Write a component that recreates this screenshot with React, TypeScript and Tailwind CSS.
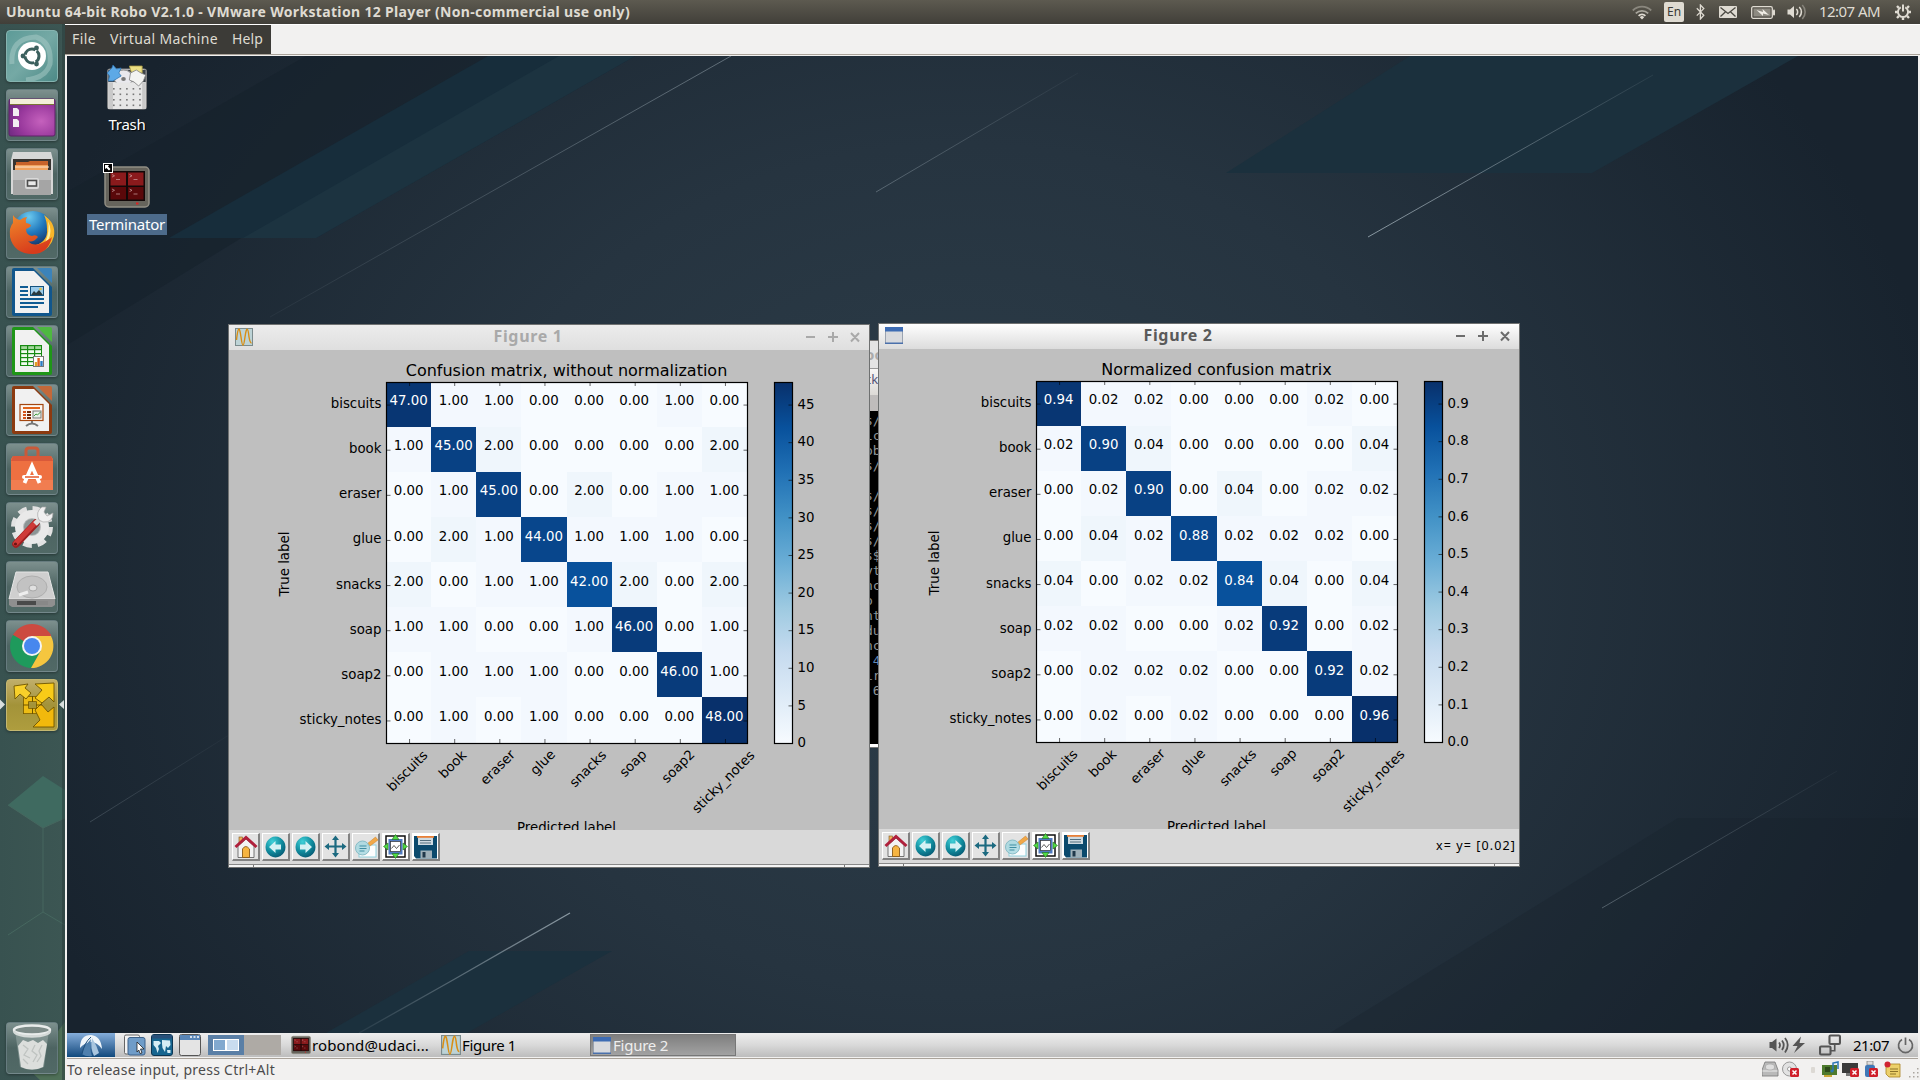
import React, { useLayoutEffect, useRef, useState } from 'react';

/** Text stretched by letter spacing so that it takes a given width. */
function Fit({ w, className = '', children }: { w: number; className?: string; children: string }) {
  const ref = useRef<HTMLSpanElement>(null);
  const [ls, setLs] = useState(0);
  useLayoutEffect(() => {
    if (ref.current) setLs((w - ref.current.getBoundingClientRect().width) / children.length);
  }, [w, children]);
  return (
    <span className={`inline-block whitespace-nowrap ${className}`} style={{ width: w }}>
      <span ref={ref} style={{ letterSpacing: ls }}>{children}</span>
    </span>
  );
}

/* ---------- host panel ---------- */

function HostBar() {
  return (
    <header className="flex h-6 shrink-0 items-center justify-between bg-linear-to-b from-[#5d5a50] to-[#413f39] pl-1.5 text-[#dfdbd2]">
      <Fit w={624} className="text-[14px] leading-6 font-bold">
        Ubuntu 64-bit Robo V2.1.0 - VMware Workstation 12 Player (Non-commercial use only)
      </Fit>
      <div className="flex h-6 items-center pr-2">
        <svg className="mr-3" width="20" height="16" viewBox="0 0 20 16" fill="none" strokeWidth="1.8">
          <path d="M0.8 6.5 A13 13 0 0 1 19.2 6.5" stroke="#8a877e" />
          <path d="M3.8 9.3 A9 9 0 0 1 16.2 9.3" stroke="#a9a69d" />
          <path d="M6.6 11.8 A5 5 0 0 1 13.4 11.8" stroke="#dfdbd2" />
          <path d="M10 15.5 L7.8 13.2 A3 3 0 0 1 12.2 13.2 Z" fill="#dfdbd2" />
        </svg>
        <span className="mr-3 flex h-5 w-5 items-center justify-center rounded-[2px] bg-[#dfdbd2] text-[12px] text-[#3c3b37]">En</span>
        <svg className="mr-3.5" width="9" height="16" viewBox="0 0 9 16" fill="none" stroke="#dfdbd2" strokeWidth="1.3">
          <path d="M0.8 4.2 L7.8 11.2 L4.4 15 V1 L7.8 4.6 L0.8 11.6" />
        </svg>
        <svg className="mr-3.5" width="18" height="12" viewBox="0 0 18 12">
          <rect width="18" height="12" rx="1" fill="#dfdbd2" />
          <path d="M1.5 1.5 L9 7.5 L16.5 1.5 M1.5 10.5 L6.3 6 M16.5 10.5 L11.7 6" fill="none" stroke="#4a4841" strokeWidth="1.3" />
        </svg>
        <svg className="mr-3" width="24" height="13" viewBox="0 0 24 13">
          <rect x="0.7" y="0.7" width="20.6" height="11.6" rx="1.5" fill="none" stroke="#dfdbd2" strokeWidth="1.3" />
          <rect x="2.5" y="2.5" width="17" height="8" fill="#8d8a81" />
          <path d="M5.5 4 L12 6 L11.5 3 L18 9 L12 7.5 L12 10 Z" fill="#f0ede5" />
          <rect x="22" y="3.5" width="2" height="6" rx="1" fill="#dfdbd2" />
        </svg>
        <svg className="mr-3" width="20" height="16" viewBox="0 0 20 16" fill="none" stroke="#dfdbd2" strokeWidth="1.6">
          <path d="M0.5 5.5 H3 L7 2 V14 L3 10.5 H0.5 Z" fill="#dfdbd2" stroke="none" />
          <path d="M9.3 5 A4 4 0 0 1 9.3 11" />
          <path d="M12.3 3 A7 7 0 0 1 12.3 13" />
          <path d="M15.3 1 A10 10 0 0 1 15.3 15" stroke="#87847b" />
        </svg>
        <Fit w={61} className="-mt-px mr-3.5 text-[15px]">12:07 AM</Fit>
        <svg width="18" height="18" viewBox="-1 -1 18 18" fill="none" stroke="#dfdbd2">
          <path d="M5.8 3.4 A5.1 5.1 0 1 0 10.2 3.4" strokeWidth="2" />
          <path d="M8 0.5 V7.5" strokeWidth="2" />
          <path d="M3.8 3.8 L2 2 M12.2 3.8 L14 2 M2.6 8 H0 M13.400 8 H16 M3.800 12.200 L2 14 M12.200 12.200 L14 14 M8 13.400 V16" strokeWidth="2.4" />
        </svg>
      </div>
    </header>
  );
}

/* ---------- launcher ---------- */

function Tile({ children, tone = 'glass' }: { children: React.ReactNode; tone?: 'glass' | 'teal' | 'gold' }) {
  const tones = {
    glass: 'bg-linear-to-b from-[#7d908e] via-[#4d6462] to-[#516966] border-[#71858a]/70',
    teal: 'bg-linear-to-br from-[#5d9b98] via-[#75a9a5] to-[#4c8a87] border-[#86b4b0]',
    gold: 'bg-linear-to-b from-[#c0ae6a] via-[#a39339] to-[#ae9d3e] border-[#c4b871]',
  };
  return (
    <div className={`h-[52px] w-[52px] shrink-0 overflow-hidden rounded-[4px] border shadow-[0_1px_3px_rgba(0,0,0,0.35)] ${tones[tone]}`}>
      <svg className="-m-px" width="52" height="52" viewBox="0 0 52 52">{children}</svg>
    </div>
  );
}

function DocBase({ dark, light }: { dark: string; light: string }) {
  return (
    <>
      <path d="M8 2 H27 L46 21 V48 Q46 50 44 50 H8 Q6 50 6 48 V4 Q6 2 8 2 Z" fill={dark} />
      <path d="M31 2 H44 Q46 2 46 4 V17 Z" fill={light} />
      <path d="M9 5 H28 L43 20 V47 H9 Z" fill="#f1f1f1" />
    </>
  );
}

function Launcher() {
  return (
    <nav className="relative flex w-[65px] shrink-0 flex-col justify-between overflow-hidden bg-linear-to-r from-[#385250] to-[#3c5653] pt-1.5 pb-1.5 pl-1.5">
      <svg className="absolute top-0 left-0" width="65" height="1056" viewBox="0 24 65 1056">
        <path d="M8 805 L43 776 L65 790 V818 L43 828 Z" fill="#3f6a60" />
        <path d="M43 828 V912 L8 935 M43 912 L65 925 M8 805 L43 828 L65 818" stroke="#46675f" fill="none" />
        <path d="M8 1050 L55 1035 L65 1022 V1080 H40 Z" fill="#4f7058" />
        <rect x="62" y="24" width="3" height="1056" fill="#28393a" opacity="0.5" />
      </svg>
      <div className="relative flex flex-col gap-[7px]">
        <Tile tone="teal">
          <path d="M6 34 Q4 8 30 7 Q46 12 44 34 Q40 48 20 50" fill="none" stroke="#a9ccc8" strokeWidth="5" opacity="0.5" />
          <circle cx="26" cy="26" r="14" fill="#fff" />
          <circle cx="26" cy="26" r="7" fill="none" stroke="#3b5f5d" strokeWidth="3" strokeDasharray="13 1.66" strokeDashoffset="6" />
          <circle cx="17" cy="26" r="2.4" fill="#3b5f5d" /><circle cx="30.5" cy="18" r="2.4" fill="#3b5f5d" /><circle cx="30.5" cy="34" r="2.4" fill="#3b5f5d" />
        </Tile>
        <Tile>
          <defs><radialGradient id="pur" cx="0.7" cy="0.6" r="0.8"><stop offset="0" stopColor="#c561bd" /><stop offset="0.6" stopColor="#98389c" /><stop offset="1" stopColor="#6d2a80" /></radialGradient></defs>
          <rect x="3" y="10" width="46" height="37" rx="2" fill="url(#pur)" stroke="#5f2369" />
          <path d="M4 10 H48 V15 H4 Z" fill="#f3efd9" /><path d="M4 15.5 H48" stroke="#7b7535" />
          <path d="M7 19 h4 l2 2 v6 h-6 Z M7 30 h4 l2 2 v6 h-6 Z" fill="#f2eef2" />
        </Tile>
        <Tile>
          <path d="M7 4 H45 L47 12 V46 H5 V12 Z" fill="#d7d7d7" />
          <rect x="7" y="11" width="38" height="12" fill="#383431" />
          <path d="M10 14 h12 l2 -1 h18 v10 H10 Z" fill="#c7622a" /><path d="M9 17 h33 v6 H9 Z" fill="#f0a25e" /><path d="M9 19 h34" stroke="#fde4cd" />
          <path d="M7 22 H45 V47 H7 Z" fill="#a5a5a5" /><path d="M7 22 H45 V32 H7 Z" fill="#bdbdbd" />
          <rect x="19" y="30" width="14" height="11" rx="2" fill="#dadada" /><rect x="21.5" y="32.5" width="9" height="5.5" fill="#e8e8e8" stroke="#4d4d4d" strokeWidth="1.6" />
        </Tile>
        <Tile>
          <defs><radialGradient id="ff" cx="0.4" cy="0.15" r="0.8"><stop offset="0" stopColor="#6cc9ee" /><stop offset="0.5" stopColor="#2078bd" /><stop offset="1" stopColor="#152b5d" /></radialGradient>
            <linearGradient id="ffo" x1="0" y1="0" x2="0.4" y2="1"><stop offset="0" stopColor="#f08a2a" /><stop offset="1" stopColor="#d83c1c" /></linearGradient></defs>
          <circle cx="27" cy="24" r="20" fill="url(#ff)" />
          <path d="M38 8 Q50 16 48 29 Q45 42 32 46 L30 38 Q42 34 41 22 Q41 14 38 8 Z" fill="#f7b52a" />
          <path d="M42 14 Q47 24 42 34 L39 36 Q44 24 42 14 Z" fill="#fff1a0" />
          <path d="M7 8 Q9 12 14 13 Q18 10 21 10 Q19 13 20 16 Q25 17 25 19 Q23 21 20 22 Q20 28 26 29 Q30 27 32 30 Q27 36 22 34 Q27 40 36 36 Q44 32 46 30 Q42 47 27 47 Q8 47 4 30 Q3 20 7 16 Z" fill="url(#ffo)" />
        </Tile>
        <Tile>
          <DocBase dark="#11568c" light="#3c83b9" />
          <path d="M14 21 h8 M14 25 h8 M14 29 h8 M14 33 h24 M14 37 h24 M14 41 h18" stroke="#105c94" strokeWidth="1.8" />
          <rect x="24.5" y="20.5" width="13" height="9" fill="#9bcbea" stroke="#14537f" /><path d="M25 29 l3 -4 2 2 3 -3 4 5 Z" fill="#2b3a3f" /><circle cx="34.5" cy="23" r="1.3" fill="#e9c13e" />
        </Tile>
        <Tile>
          <DocBase dark="#1f9618" light="#4eb840" />
          <rect x="14" y="20" width="22" height="21" fill="#178a12" />
          {[0, 1, 2, 3, 4].map((r) => [0, 1, 2].map((c) => <rect key={`${r}${c}`} x={15.2 + c * 7} y={21.2 + r * 4} width="5.8" height="2.8" fill={r === 0 ? '#a5d79d' : '#f2fbf0'} />))}
          <rect x="27.5" y="31.5" width="10" height="10" fill="#fff" stroke="#777" /><path d="M30 41 v-4" stroke="#e0a020" strokeWidth="2.4" /><path d="M32.6 41 v-8" stroke="#e0601d" strokeWidth="2.4" /><path d="M35.5 41 v-5" stroke="#2b7cc4" strokeWidth="2.4" />
        </Tile>
        <Tile>
          <DocBase dark="#8c3a10" light="#c3693a" />
          <rect x="14" y="20.5" width="23" height="16" fill="#fdf6f0" stroke="#a4460f" strokeWidth="1.2" />
          <path d="M17 24 h17" stroke="#e0641c" strokeWidth="2" /><path d="M17 28 h3 M17 31 h3 M17 34 h3" stroke="#d4531a" strokeWidth="2" /><path d="M21 28 h4 M21 31 h4 M21 34 h4" stroke="#72290a" strokeWidth="2" />
          <rect x="27" y="27" width="8" height="7" fill="#e9efe9" stroke="#777" /><path d="M28 32 l2 -2 1.5 1 3 -3" stroke="#3c9a3c" fill="none" /><path d="M26 37 v3 M20 42 q6 -5 12 0" stroke="#777" strokeWidth="2" fill="none" />
        </Tile>
        <Tile>
          <path d="M20 16 V8 Q20 5 23 5 H29 Q32 5 32 8 V16" fill="none" stroke="#c85a3a" strokeWidth="3" />
          <path d="M7 13 H45 L47 16 V47 H5 V16 Z" fill="#ee7041" /><path d="M7 13 H45 L47 18 H5 Z" fill="#d9593a" /><path d="M5 37 H47 V47 H5 Z" fill="#f17d50" />
          <path d="M18.500 40 L26 23 L33.500 40" fill="none" stroke="#fff" strokeWidth="3.800" /><path d="M18 34 H34" stroke="#fff" strokeWidth="4" strokeLinecap="round" /><path d="M19 34 H33" stroke="#e4592b" strokeWidth="1.400" />
        </Tile>
        <Tile>
          <circle cx="26" cy="25" r="17" fill="none" stroke="#e2e2e2" strokeWidth="8" strokeDasharray="8 5.35" />
          <circle cx="26" cy="25" r="13" fill="#b9bcbc" stroke="#e9e9e9" strokeWidth="8" /><circle cx="26" cy="25" r="8" fill="#8c9595" />
          <path d="M10 42 L30 21" stroke="#9f1f20" strokeWidth="7.500" strokeLinecap="round" /><path d="M9.500 41.500 L29 21" stroke="#cf3a38" strokeWidth="5" strokeLinecap="round" />
          <path d="M29 22 L37 14" stroke="#dedede" strokeWidth="5" /><path d="M33 18 Q29 10 36 5 L40 5 L38 10 L41 14 L47 11 Q47 21 37 20 Z" fill="#f0f0f0" stroke="#a9a9a9" strokeWidth="0.7" />
          <circle cx="9.5" cy="42" r="1.6" fill="#6b1414" />
        </Tile>
        <Tile>
          <path d="M10 11 H42 L49 38 H3 Z" fill="#cfcfcf" stroke="#e6e6e6" /><path d="M3 38 H49 V44 L46 46 H6 L3 44 Z" fill="#8f8f8f" /><path d="M11 40 H42 V44 H11 Z" fill="#4a4a4a" /><path d="M30 40 H42 V44 H30 Z" fill="#888" />
          <ellipse cx="26" cy="26" rx="15" ry="11" fill="#c2c2c2" stroke="#aeaeae" /><ellipse cx="27" cy="27" rx="4" ry="3" fill="#e0e0e0" stroke="#a8a8a8" /><path d="M13 34 L22 31" stroke="#eee" strokeWidth="3" />
        </Tile>
        <Tile>
          <path d="M26 26 L6.900 15 A22 22 0 0 1 45 15 L45 16 L26 16 Z" fill="#cc4a40" />
          <path d="M26 26 L7 15 A22 22 0 0 0 25 48 L34.6 31 Z" fill="#1e9a5c" /><path d="M26 26 L34.600 31 L25 48 A22 22 0 0 0 45 16 L26 16 Z" fill="#f5c63f" />
          <circle cx="26" cy="26" r="10" fill="#f4f4f4" /><circle cx="26" cy="26" r="8" fill="#4787ee" />
        </Tile>
        <Tile tone="gold">
          <g stroke="#6e5500" strokeWidth="0.9">
            <path d="M20 20 H33 V32 H20 Z" fill="none" stroke="#6e5500" strokeWidth="6" /><path d="M20 20 H33 V32 H20 Z" fill="none" stroke="#eebd14" strokeWidth="4.400" />
            <path d="M8 7 L22 5 L19 9 L25 14 L20 20 L14 15 L9 20 Z" fill="#f8d02a" />
            <path d="M29 5 L48 4 V23 L43 18 L36 24 L29 19 L36 11 Z" fill="#f8cb18" />
            <path d="M29 31 L35 25 L42 33 L48 28 V48 H27 L34 41 Z" fill="#f2b90c" />
          </g>
          <path d="M17 26 h6 M30 26 h6 M26.500 17 v6 M26.500 29 v6" fill="none" stroke="#6e5500" strokeWidth="1" />
        </Tile>
      </div>
      <svg className="absolute top-[675px] left-0" width="65" height="12" viewBox="0 0 65 12" fill="#d8dedd"><path d="M0 0.5 L5 5.5 L0 10.5 Z M64 1 L59 5.5 L64 10 Z" /></svg>
      <div className="relative">
        <Tile>
          <path d="M9 8 L14 45 Q26 51 38 45 L43 8 Z" fill="#8fa09c" opacity="0.7" />
          <path d="M12 24 L15 45 Q26 50 37 45 L41 22 L37 18 L32 21 L27 18 L22 20 L17 18 Z" fill="#dcdedc" />
          <path d="M17 23 l5 4 -4 6 6 3 M29 23 l-3 6 5 4 -4 7 M36 23 l-3 6 2 5 -4 6 M17 37 l5 5" stroke="#bfc3c1" strokeWidth="1.3" fill="none" />
          <ellipse cx="26" cy="8" rx="18" ry="4.5" fill="#7d8b88" stroke="#e9eceb" strokeWidth="2.5" /><path d="M8 9 Q9 14 26 14.5 Q43 14 44 9" fill="none" stroke="#d5dad8" strokeWidth="2.5" />
        </Tile>
      </div>
    </nav>
  );
}

/* ---------- plots ---------- */

const LABELS = ['biscuits', 'book', 'eraser', 'glue', 'snacks', 'soap', 'soap2', 'sticky_notes'];
const LABEL_Y = [421.5, 415, 418, 413, 419.5, 414, 417, 432.5];
const COUNTS = [
  [47, 1, 1, 0, 0, 0, 1, 0],
  [1, 45, 2, 0, 0, 0, 0, 2],
  [0, 1, 45, 0, 2, 0, 1, 1],
  [0, 2, 1, 44, 1, 1, 1, 0],
  [2, 0, 1, 1, 42, 2, 0, 2],
  [1, 1, 0, 0, 1, 46, 0, 1],
  [0, 1, 1, 1, 0, 0, 46, 1],
  [0, 1, 0, 1, 0, 0, 0, 48],
];
const BLUES = [[247, 251, 255], [222, 235, 247], [198, 219, 239], [158, 202, 225], [107, 174, 214], [66, 146, 198], [33, 113, 181], [8, 81, 156], [8, 48, 107]];

function blue(t: number) {
  const p = Math.min(t, 1) * 8;
  const i = Math.min(Math.floor(p), 7);
  const c = BLUES[i].map((v, k) => Math.round(v + (BLUES[i + 1][k] - v) * (p - i)));
  return `rgb(${c.join(',')})`;
}

const X0 = 157.5;
const Y0 = 32;
const SIZE = 361;
const CELL = SIZE / 8;

function Plot({ title, scale, ticks, max, digits, id }: { title: string; scale: number; ticks: number[]; max: number; digits: number; id: string }) {
  return (
    <svg className="block bg-[#bfbfbf]" width="640" height="480" viewBox="0 0 640 480" fontFamily='"DejaVu Sans", sans-serif' fontSize="13.33">
      <defs>
        <linearGradient id={id} x1="0" y1="1" x2="0" y2="0">
          {BLUES.map((c, i) => <stop key={i} offset={i / 8} stopColor={`rgb(${c.join(',')})`} />)}
        </linearGradient>
      </defs>
      <text x="337.5" y="25.5" fontSize="16" textAnchor="middle">{title}</text>
      <g shapeRendering="crispEdges">
        {COUNTS.map((row, r) => row.map((v, c) => (
          <rect key={`${r}-${c}`} x={X0 + c * CELL - 0.5} y={Y0 + r * CELL - 0.5} width={CELL + 0.5} height={CELL + 0.5} fill={blue(v / 48)} />
        )))}
      </g>
      {COUNTS.map((row, r) => row.map((v, c) => (
        <text key={`${r}-${c}`} x={X0 + (c + 0.5) * CELL - 0.5} y={Math.round(Y0 + (r + 0.5) * CELL + 0.6)} textAnchor="middle" fill={v > 24 ? '#fff' : '#000'}>
          {(v * scale).toFixed(2)}
        </text>
      )))}
      {LABELS.map((l, i) => {
        const t = (i + 0.5) * CELL;
        return (
          <g key={l}>
            <path d={`M${X0} ${Y0 + t + 0.5} h4 M${X0 + SIZE} ${Y0 + t + 0.5} h-4 M${X0 + t + 0.5} ${Y0} v4 M${X0 + t + 0.5} ${Y0 + SIZE} v-4`} stroke="#000" strokeWidth="0.6" />
            <text x="152.5" y={Y0 + t + 3.5} textAnchor="end">{l}</text>
            <text transform={`translate(${X0 + t - 1} ${LABEL_Y[i]}) rotate(-45)`} y="3.5" textAnchor="middle">{l}</text>
          </g>
        );
      })}
      <rect x={X0} y={Y0 + 0.5} width={SIZE} height={SIZE} fill="none" stroke="#000" strokeWidth="1.2" />
      <rect x="545.5" y={Y0 + 0.5} width="18" height={SIZE} fill={`url(#${id})`} stroke="#000" strokeWidth="1.2" />
      {ticks.map((t) => {
        const y = Y0 + SIZE * (1 - t / max);
        return (
          <g key={t}>
            <path d={`M563.5 ${y + 0.5} h-4`} stroke="#000" strokeWidth="0.6" />
            <text x="568.5" y={y + 4.2}>{t.toFixed(digits)}</text>
          </g>
        );
      })}
      <text transform="translate(60 214) rotate(-90)" textAnchor="middle">True label</text>
      <text x="337.5" y="481.5" textAnchor="middle">Predicted label</text>
    </svg>
  );
}

function ToolButton({ children, lit = false }: { children: React.ReactNode; lit?: boolean }) {
  return (
    <div className={`h-7 w-7 border-t border-r-2 border-b-2 border-l border-t-white border-r-[#828282] border-b-[#828282] border-l-white ${lit ? 'bg-white' : 'bg-[#e3e3e3]'}`}>
      <svg className="block" width="25" height="25" viewBox="0 0 25 25">{children}</svg>
    </div>
  );
}

const BALL = 'M12.5 2.5 a10 10.5 0 1 0 0.01 0 Z';

function Toolbar({ id }: { id: string }) {
  return (
    <div className="flex gap-0.5">
      <ToolButton>
        <rect x="6" y="3" width="3.5" height="8" fill="#f0b158" stroke="#7a5420" strokeWidth="0.6" />
        <path d="M5 12 L13 5 L21 12 V23.5 H5 Z" fill="#f3f3f3" stroke="#555" strokeWidth="0.8" />
        <path d="M9.5 23.5 V15 Q12.5 10 16.5 15 V23.5 Z" fill="#f6b441" stroke="#8b5a16" strokeWidth="0.9" />
        <path d="M2.5 13 L13 3.5 L23.5 13" fill="none" stroke="#b0203c" strokeWidth="3" />
      </ToolButton>
      <ToolButton>
        <defs><radialGradient id={`${id}-ball`} cx="0.35" cy="0.25" r="0.8"><stop offset="0" stopColor="#3fd0d8" /><stop offset="0.6" stopColor="#108a9c" /><stop offset="1" stopColor="#075a74" /></radialGradient></defs>
        <path d={BALL} fill={`url(#${id}-ball)`} /><path d="M6 13 L12.5 7 V10.5 H18 V15.5 H12.5 V19 Z" fill="#d4f1f4" />
      </ToolButton>
      <ToolButton>
        <path d={BALL} fill={`url(#${id}-ball)`} /><path d="M19 13 L12.5 7 V10.5 H7 V15.5 H12.5 V19 Z" fill="#d4f1f4" />
      </ToolButton>
      <ToolButton>
        <path d="M12.5 4 V21 M4 12.5 H21" stroke="#1c6a80" strokeWidth="2.2" />
        <path d="M12.5 1.5 L16 6 H9 Z M12.5 23.5 L16 19 H9 Z M1.5 12.5 L6 9 V16 Z M23.5 12.5 L19 9 V16 Z" fill="#1c6a80" />
      </ToolButton>
      <ToolButton>
        <rect x="6" y="11" width="17" height="12" fill="#fdfdfd" stroke="#8fd0dc" />
        <path d="M14 10 L22.5 3 L25 6 L17 12 Z" fill="#f2a848" stroke="#c9822b" strokeWidth="0.5" />
        <circle cx="9.5" cy="14" r="7" fill="#a9d8e0" fillOpacity="0.85" stroke="#86bcc6" />
        <path d="M6.5 12 h7 M6.5 14.5 h7 M6.5 17 h5" stroke="#3f8ea2" strokeWidth="1.1" />
      </ToolButton>
      <ToolButton lit>
        <rect x="3" y="2" width="19" height="21" fill="#fff" stroke="#111" strokeWidth="1.5" />
        <rect x="5.5" y="5" width="14" height="15.5" fill="#4f7bc0" /><rect x="7.5" y="7.5" width="10" height="10" fill="#fff" stroke="#333" strokeWidth="0.7" />
        <path d="M8.5 14.5 L11 11.5 L13.5 14.5 L16.5 11" fill="none" stroke="#333" strokeWidth="0.8" />
        <path d="M12.5 0.5 L16 5.5 H9 Z M12.5 24.5 L16 19.5 H9 Z M0.5 12.5 L5 9 V16 Z M24.5 12.5 L20 9 V16 Z" fill="#52dd44" stroke="#1f6a1c" strokeWidth="0.6" />
      </ToolButton>
      <ToolButton lit>
        <path d="M1 2 H24 V24.5 H3 L1 22 Z" fill="#0b4a6d" /><rect x="5" y="3" width="15" height="8" fill="#cfdbe2" /><rect x="4" y="2" width="17" height="1.8" fill="#e88038" />
        <path d="M7 6.500 h11 M7 9 h11" stroke="#54707f" strokeWidth="1.2" /><rect x="7.5" y="16.5" width="11.5" height="8" fill="#9fb0b9" /><rect x="9.5" y="18" width="3" height="5.5" fill="#20384a" />
      </ToolButton>
    </div>
  );
}

function WaveIcon({ small = false }: { small?: boolean }) {
  return (
    <svg className="shrink-0" width={small ? 20 : 18} height={small ? 20 : 18} viewBox="0 0 18 18">
      <rect x="0.5" y="0.5" width="17" height="17" fill="#bdd3d6" stroke="#7b8b8d" />
      <path d="M1.500 12 C3 -2 4.500 -2 6 9 S8.500 20 10 9 S13 -1 14 9 Q15 15 16.500 15" fill="none" stroke="#d98e14" strokeWidth="1.400" />
    </svg>
  );
}

function WindowIcon() {
  return (
    <svg className="shrink-0" width="18" height="17" viewBox="0 0 18 17">
      <rect x="0.5" y="0.5" width="17" height="16" fill="#d8dade" stroke="#9aa3b0" /><rect width="18" height="4.5" fill="#3d6cb4" /><rect y="15.5" width="18" height="1.5" fill="#4a70ab" />
    </svg>
  );
}

function FigureWindow({ place, name, active, status, children }: { place: string; name: string; active: boolean; status?: string; children: React.ReactNode }) {
  return (
    <section className={`absolute flex h-[544px] w-[642px] flex-col border border-[#6f7171] bg-[#d9d9d9] ${place}`}>
      <div className={`grid h-[25px] shrink-0 grid-cols-[1fr_auto_1fr] items-center bg-linear-to-b pr-[9px] pb-0.5 pl-1.5 ${active ? 'from-[#fefefe] to-[#dcdcdc] text-[#5a5a5a]' : 'from-[#ececec] to-[#dfdfdf] text-[#a9a9a9]'}`}>
        {active ? <WindowIcon /> : <WaveIcon />}
        <Fit w={69} className="mr-[39px] text-[16px] leading-[23px] font-bold">{name}</Fit>
        <svg className="justify-self-end" width="55" height="12" viewBox="0 0 55 12" fill="none" stroke={active ? '#6c6c6c' : '#a9a9a9'} strokeWidth="2"><path d="M1 6 H10 M23 6 H33 M28 1 V11 M46 2 L54 10.5 M54 2 L46 10.5" /></svg>
      </div>
      {children}
      <div className="flex h-[34px] shrink-0 items-center justify-between px-[3px] text-[12px] text-black">
        <Toolbar id={name.replace(' ', '')} />
        {status ? <Fit w={80} className="text-[12.5px]">{status}</Fit> : null}
      </div>
      <div className="flex h-[3px] shrink-0 gap-px border-t border-[#888] bg-[#777]">
        <span className="w-6 bg-[#f4f4f4]" /><span className="grow bg-[#f4f4f4]" /><span className="w-6 bg-[#f4f4f4]" />
      </div>
    </section>
  );
}

/* ---------- guest desktop ---------- */

function Wallpaper() {
  return (
    <svg className="absolute inset-0" width="1851" height="977" viewBox="67 56 1851 977">
      <defs>
        <radialGradient id="bg" gradientUnits="userSpaceOnUse" cx="960" cy="570" r="1000" gradientTransform="translate(0 85) scale(1 0.85)">
          <stop offset="0" stopColor="#2d3e4a" /><stop offset="0.5" stopColor="#263440" /><stop offset="1" stopColor="#18232e" />
        </radialGradient>
        <linearGradient id="ray" x1="0" y1="1" x2="1" y2="0"><stop offset="0" stopColor="#a3b2bb" stopOpacity="0.8" /><stop offset="1" stopColor="#a3b2bb" stopOpacity="0.1" /></linearGradient>
        <linearGradient id="ray2" x1="0" y1="1" x2="1" y2="0"><stop offset="0" stopColor="#a3b2bb" stopOpacity="0.1" /><stop offset="1" stopColor="#a3b2bb" stopOpacity="0.8" /></linearGradient>
      </defs>
      <rect x="67" y="56" width="1851" height="977" fill="url(#bg)" />
      <path d="M306 56 H559 L243 237 L67 345 V192 Z" fill="#16212b" opacity="0.6" />
      <path d="M488 56 H635 L316 238 H169 Z" fill="#172d3b" />
      <path d="M559 56 H635 L316 238 H243 Z" fill="#1c3340" />
      <path d="M1410 56 H1798 L1592 173 H1226 Z" fill="#1b303d" />
      <path d="M1678 818 H1918 V1033 H1330 Z" fill="#16212b" opacity="0.3" />
      <path d="M469 951 H612 L467 1033 H326 Z" fill="#1b303d" />
      <path d="M731 56 L270 317" stroke="url(#ray2)" strokeOpacity="0.6" />
      <path d="M876 192 L1078 73" stroke="url(#ray)" strokeOpacity="0.5" />
      <path d="M1368 237 L1653 75" stroke="url(#ray)" />
      <path d="M1602 908 L1837 771" stroke="url(#ray)" strokeOpacity="0.5" />
      <path d="M359 1033 L453 980 L570 913" stroke="url(#ray2)" strokeWidth="1.3" fill="none" />
      <path d="M90 822 L229 735" stroke="url(#ray)" strokeOpacity="0.3" />
    </svg>
  );
}

const TERMINAL = ['s/', 'lc', 'ob', 's/', '', 's/', 's/', 's/', 's/', 's$', 'yt', 'nc', 'o ', 'nt', 'du', 'nc', ' 4', 'ir', ' 6'];

function TerminalEdge() {
  return (
    <div className="absolute top-[284px] left-[802px] flex h-[408px] w-3 flex-col overflow-hidden border-t border-[#777] bg-[#bfbcbb]">
      <div className="h-[27px] shrink-0 overflow-hidden bg-[#e4e4e4] text-[15px] leading-[26px] font-bold text-[#aaa]"><span className="-ml-1">oo</span></div>
      <div className="h-[27px] shrink-0 overflow-hidden border-t border-[#999] bg-linear-to-b from-[#f8f7f6] to-[#dddad6] text-[13px] leading-[20px] text-[#557]"><span className="-ml-1">ck</span></div>
      <div className="mt-4 h-[333px] shrink-0 overflow-hidden bg-black pt-0.5 text-[13px] leading-[15px] text-[#8f9598]">
        {TERMINAL.map((t, i) => <pre key={i} className={`-ml-1 h-[15px] font-['DejaVu_Sans_Mono',monospace] ${i === 16 ? 'text-[#6088b8]' : ''}`}>{t}</pre>)}
      </div>
      <div className="h-1 shrink-0 border-b border-[#777] bg-white" />
    </div>
  );
}

function TerminatorScreen({ size }: { size: number }) {
  return (
    <svg className="shrink-0" width={size} height={size} viewBox="0 0 46 46">
      <rect x="1" y="3" width="44" height="40" rx="4" fill="#66645c" stroke="#918e84" strokeWidth="1.5" />
      <rect x="5" y="7" width="36" height="30" fill="#120808" />
      <path d="M6.500 8.500 h15.500 v13 h-15.500 Z M24 8.500 h15.500 v13 h-15.500 Z" fill="#8a1a1c" /><path d="M6.500 23 h15.500 v12.500 h-15.500 Z M24 23 h15.500 v12.500 h-15.500 Z" fill="#5a080a" />
      <path d="M8 10.5 l2.500 1.300 -2.500 1.300 M12 15.500 h4 M25.500 10.500 l2.500 1.300 -2.500 1.300 M29.500 15.500 h4 M8 25 l2.500 1.300 -2.500 1.300 M12 30 h4 M25.500 25 l2.500 1.300 -2.500 1.300 M29.500 30 h4" fill="none" stroke="#cfa3a3" strokeWidth="0.700" />
      <rect x="32" y="38.5" width="2.5" height="2" fill="#d22" />
    </svg>
  );
}

function DesktopIcons() {
  return (
    <div className="absolute top-[9px] left-5 flex w-20 flex-col items-center text-[15px] text-white">
      <svg width="42" height="46" viewBox="0 0 36 46" preserveAspectRatio="none">
        <rect x="1.5" y="4" width="33" height="40" rx="2" fill="#d9d9d9" stroke="#888" />
        <path d="M2 5 H34 V17 H2 Z" fill="#3c4248" />
        <circle cx="15" cy="13" r="8" fill="#e9e9ee" stroke="#999" /><circle cx="15" cy="14" r="2" fill="#777" />
        <path d="M1 8 L5 3 L6 0 L9 4 L13 3 L11 8 L13 11 L6 16 L2 16 L3 11 Z" fill="#5da9e6" stroke="#2f73ae" strokeWidth="0.7" />
        <path d="M20 1 H31 V8 H22 Z" fill="#ecdf84" stroke="#a99b42" strokeWidth="0.7" />
        <path d="M2 17.5 H34 V44 H2 Z" fill="#e6e6e6" /><path d="M2 17.5 H6 V44 H2 Z M31 17.5 H34 V44 H31 Z" fill="#c9c9c9" />
        <path d="M21 8 L26 5 L30 8 L34 10 L32 16 L28 21 L24 17 L20 15 Z" fill="#f3f3f1" stroke="#888" strokeWidth="0.8" />
        {[0, 1, 2, 3, 4].map((c) => [0, 1, 2, 3].map((r) => <rect key={`${c}${r}`} x={6 + c * 5.6} y={23 + r * 5.5} width="1.4" height="1.6" fill="#777" />))}
      </svg>
      <Fit w={37} className="mt-0.5 leading-[22px] [text-shadow:1px_1px_1px_#000]">Trash</Fit>
      <div className="relative mt-[29px]">
        <TerminatorScreen size={46} />
        <svg className="absolute -top-px -left-px" width="10" height="10" viewBox="0 0 10 10"><rect width="10" height="10" fill="#fff" /><rect x="1" y="1" width="8" height="8" fill="#000" /><path d="M2 2 H6 L5 3.5 L7.5 6 L6 7.5 L3.5 5 L2 6 Z" fill="#fff" /></svg>
      </div>
      <div className="mt-1 flex h-[21px] w-20 items-center justify-center bg-[#4d6b8b]"><Fit w={76}>Terminator</Fit></div>
    </div>
  );
}

function GuestPanel() {
  return (
    <div className="flex h-6 shrink-0 items-center bg-linear-to-b from-[#eeeeee] via-[#d9d9d9] to-[#bdbdbd] text-[15px] text-black">
      <div className="flex h-full w-12 items-center justify-center bg-linear-to-b from-[#85aedb] to-[#0f4a7d]">
        <svg width="24" height="23" viewBox="0 0 24 23"><path d="M1 14 Q1 1 12 1 Q22 2 23 15 Q18 8 12 8 Q5 9 1 14 Z" fill="#f0f6fb" /><path d="M3 20 Q6 11 12 5 Q10 14 13 22 Q7 23 3 20 Z" fill="#4f80ae" /><path d="M13 4 Q18 12 20 19 L15 22 Q11 14 13 4 Z" fill="#a9c6df" /><path d="M12 3 Q5 9 3 20" stroke="#1f4f7d" fill="none" /></svg>
      </div>
      <svg className="ml-[9px] shrink-0" width="22" height="22" viewBox="0 0 22 22"><rect x="0.5" y="1" width="15" height="19" rx="1.5" fill="#f3f3f3" stroke="#666" /><rect x="4" y="3.5" width="17" height="17.5" rx="2" fill="#6f9cc8" stroke="#3c6189" /><path d="M13 8 L20 15 H16.5 L18 19 L16 19.5 L14.8 16 L13 18 Z" fill="#fff" stroke="#222" strokeWidth="0.8" /></svg>
      <svg className="ml-[5px] shrink-0" width="22" height="22" viewBox="0 0 22 22"><rect x="0.5" y="0.5" width="21" height="21" rx="2.5" fill="#16658f" stroke="#0c3551" /><rect x="1" y="1" width="20" height="3.500" fill="#28507a" /><path d="M2.500 7 H8 L10 9 L7 12 L8 15 L6.500 19 L5 14 L2.500 11 Z M11 6 L19 6.500 L19.500 11 L17 14 L15 12 L14 18 L11.500 14 L11 10 Z M16 16 h3.500 v3 h-3 Z" fill="#d5edf5" /></svg>
      <svg className="ml-1.5 shrink-0" width="22" height="22" viewBox="0 0 22 22"><rect x="0.5" y="0.5" width="21" height="21" rx="2" fill="#e4e4e4" stroke="#555" /><rect x="1" y="1" width="20" height="5" fill="#5986b8" /><path d="M11 3 h2 M14.5 3 h2 M18 3 h2" stroke="#fff" strokeWidth="1.5" /></svg>
      <div className="ml-[7px] flex h-5 w-[36px] items-center justify-center gap-0 bg-[#5a7fa6]"><span className="h-3 w-[13px] border border-white bg-[#82a9cf]" /><span className="h-3 w-[13px] border border-white bg-[#c9dcef]" /></div>
      <div className="h-5 w-[37px] bg-[#aeaaa5]" />
      <div className="ml-2.5 flex w-[150px] items-center"><TerminatorScreen size={20} /><Fit w={117} className="ml-px">robond@udaci...</Fit></div>
      <div className="flex w-[149px] items-center"><WaveIcon small /><Fit w={54} className="ml-px">Figure 1</Fit></div>
      <div className="flex h-[22px] w-[146px] items-center border border-[#777] bg-linear-to-b from-[#7f7f7f] to-[#a2a2a2] pt-px pl-0.5 text-[#eee]"><WindowIcon /><Fit w={55} className="ml-0.5">Figure 2</Fit></div>
      <div className="ml-auto flex items-center pr-1">
        <svg className="mr-[13px]" width="37" height="18" viewBox="0 0 37 18" fill="none" stroke="#555" strokeWidth="1.8"><path d="M0.5 6 H3 L7.5 2.500 V15.500 L3 12 H0.500 Z" fill="#555" stroke="none" /><path d="M10 6.500 Q12 9 10 12 M13 4.500 Q16.500 9 13 14 M16 2 Q21.500 9 16 16.500" /><path d="M32 0.500 L23.500 10 H28.500 L25 17 L36 7 H30.500 Z" fill="#555" stroke="none" /></svg>
        <svg className="mr-3" width="22" height="22" viewBox="0 0 21 21" fill="none" stroke="#555" strokeWidth="2"><rect x="10" y="1.5" width="10" height="8" rx="1" /><rect x="1" y="12" width="10" height="7.5" rx="1" /><path d="M15 10 V16 H11" strokeWidth="1.6" /></svg>
        <Fit w={36} className="mr-2">21:07</Fit>
        <svg width="17" height="17" viewBox="0 0 17 17" fill="none" stroke="#666" strokeWidth="1.7"><path d="M5 2.5 A7 7 0 1 0 12 2.5 M8.5 0.5 V8" /></svg>
      </div>
    </div>
  );
}

function RedCross({ x }: { x: number }) {
  return (
    <g>
      <rect x={x} y="7" width="9" height="9" rx="1.5" fill="#cf1f2a" />
      <path d={`M${x + 2.5} 9.5 l4 4 M${x + 6.5} 9.5 l-4 4`} stroke="#fff" strokeWidth="1.5" />
    </g>
  );
}

function StatusBar() {
  return (
    <div className="flex h-[21px] shrink-0 items-center justify-between bg-[#f2f1f0] pl-0.5 text-[14px] text-[#4c4c4c]">
      <Fit w={208} className="leading-5">To release input, press Ctrl+Alt</Fit>
      <svg width="158" height="18" viewBox="0 0 158 18">
        <path d="M3 1 H13 L16 9 V15 H0 V9 Z" fill="#b9b9b9" stroke="#777" strokeWidth="0.8" /><path d="M0.5 10 H15.5" stroke="#eee" /><ellipse cx="8" cy="6" rx="4.5" ry="3" fill="#dedede" stroke="#999" strokeWidth="0.5" />
        <circle cx="27.5" cy="8" r="7" fill="#e2e2e2" stroke="#999" /><circle cx="27.5" cy="8" r="2" fill="#fff" stroke="#999" /><RedCross x={28} />
        <rect x="49" y="6" width="4" height="6" rx="1" fill="#dcd9d4" />
        <path d="M60 4 H75 V14 H60 Z" fill="#4d7a2d" /><path d="M62 14 h8 v2 h-8 Z" fill="#c9a837" /><rect x="63" y="6" width="5" height="5" fill="#2c4a1a" /><path d="M71 10 V2 L76 1 V8" fill="none" stroke="#2b76b5" strokeWidth="1.5" /><circle cx="70" cy="10" r="1.6" fill="#2b76b5" />
        <path d="M80 2 H96 V12 H80 Z" fill="#3a3a3a" /><path d="M84 12 h8 v3 h-8 Z" fill="#777" /><RedCross x={88} />
        <rect x="105" y="0" width="6" height="4" fill="#ddd" stroke="#777" strokeWidth="0.7" /><rect x="103" y="4" width="10" height="12" rx="2" fill="#3f78b8" /><RedCross x={107} />
        <path d="M124 3 H138 V16 H127 L124 13 Z" fill="#ecd06a" stroke="#a98420" strokeWidth="0.8" /><path d="M128 8 h8 M128 10.5 h8 M128 13 h6" stroke="#8d7429" /><circle cx="125.5" cy="3.5" r="3" fill="#d02432" />
        {[[155, 7], [151, 11], [155, 11], [147, 15], [151, 15], [155, 15]].map(([x, y]) => <rect key={`${x}-${y}`} x={x} y={y} width="1.5" height="1.5" fill="#aaa69f" />)}
      </svg>
    </div>
  );
}

export default function App() {
  return (
    <div className="flex h-[1080px] w-[1920px] flex-col overflow-hidden bg-[#f2f1f0] font-['Noto_Sans',sans-serif]">
      <HostBar />
      <div className="flex min-h-0 grow">
        <Launcher />
        <main className="flex min-w-0 grow flex-col">
          <div className="flex h-[30px] shrink-0 border-t border-white bg-[#f2f1f0]">
            <div className="flex w-[206px] items-center bg-[#3c3b37] pb-0.5 pl-[7px] text-[14px] text-[#dfdbd2]">
              <Fit w={24} className="mr-3.5">File</Fit>
              <Fit w={108} className="mr-3.5">Virtual Machine</Fit>
              <Fit w={31}>Help</Fit>
            </div>
          </div>
          <div className="flex h-[1005px] shrink-0 flex-col border-t border-t-[#aaa39a] pt-px pr-0.5 pl-0.5">
            <div className="relative h-[977px] shrink-0 overflow-hidden">
              <Wallpaper />
              <DesktopIcons />
              <TerminalEdge />
              <FigureWindow place="left-[161px] top-[268px]" name="Figure 1" active={false}>
                <Plot id="bar1" title="Confusion matrix, without normalization" scale={1} max={48} digits={0} ticks={[0, 5, 10, 15, 20, 25, 30, 35, 40, 45]} />
              </FigureWindow>
              <FigureWindow place="left-[811px] top-[267px]" name="Figure 2" active status="x= y= [0.02]">
                <Plot id="bar2" title="Normalized confusion matrix" scale={0.02} max={0.96} digits={1} ticks={[0, 0.1, 0.2, 0.3, 0.4, 0.5, 0.6, 0.7, 0.8, 0.9]} />
              </FigureWindow>
            </div>
            <GuestPanel />
            <div className="mt-px h-px bg-[#aaa39a]" />
          </div>
          <StatusBar />
        </main>
      </div>
    </div>
  );
}
